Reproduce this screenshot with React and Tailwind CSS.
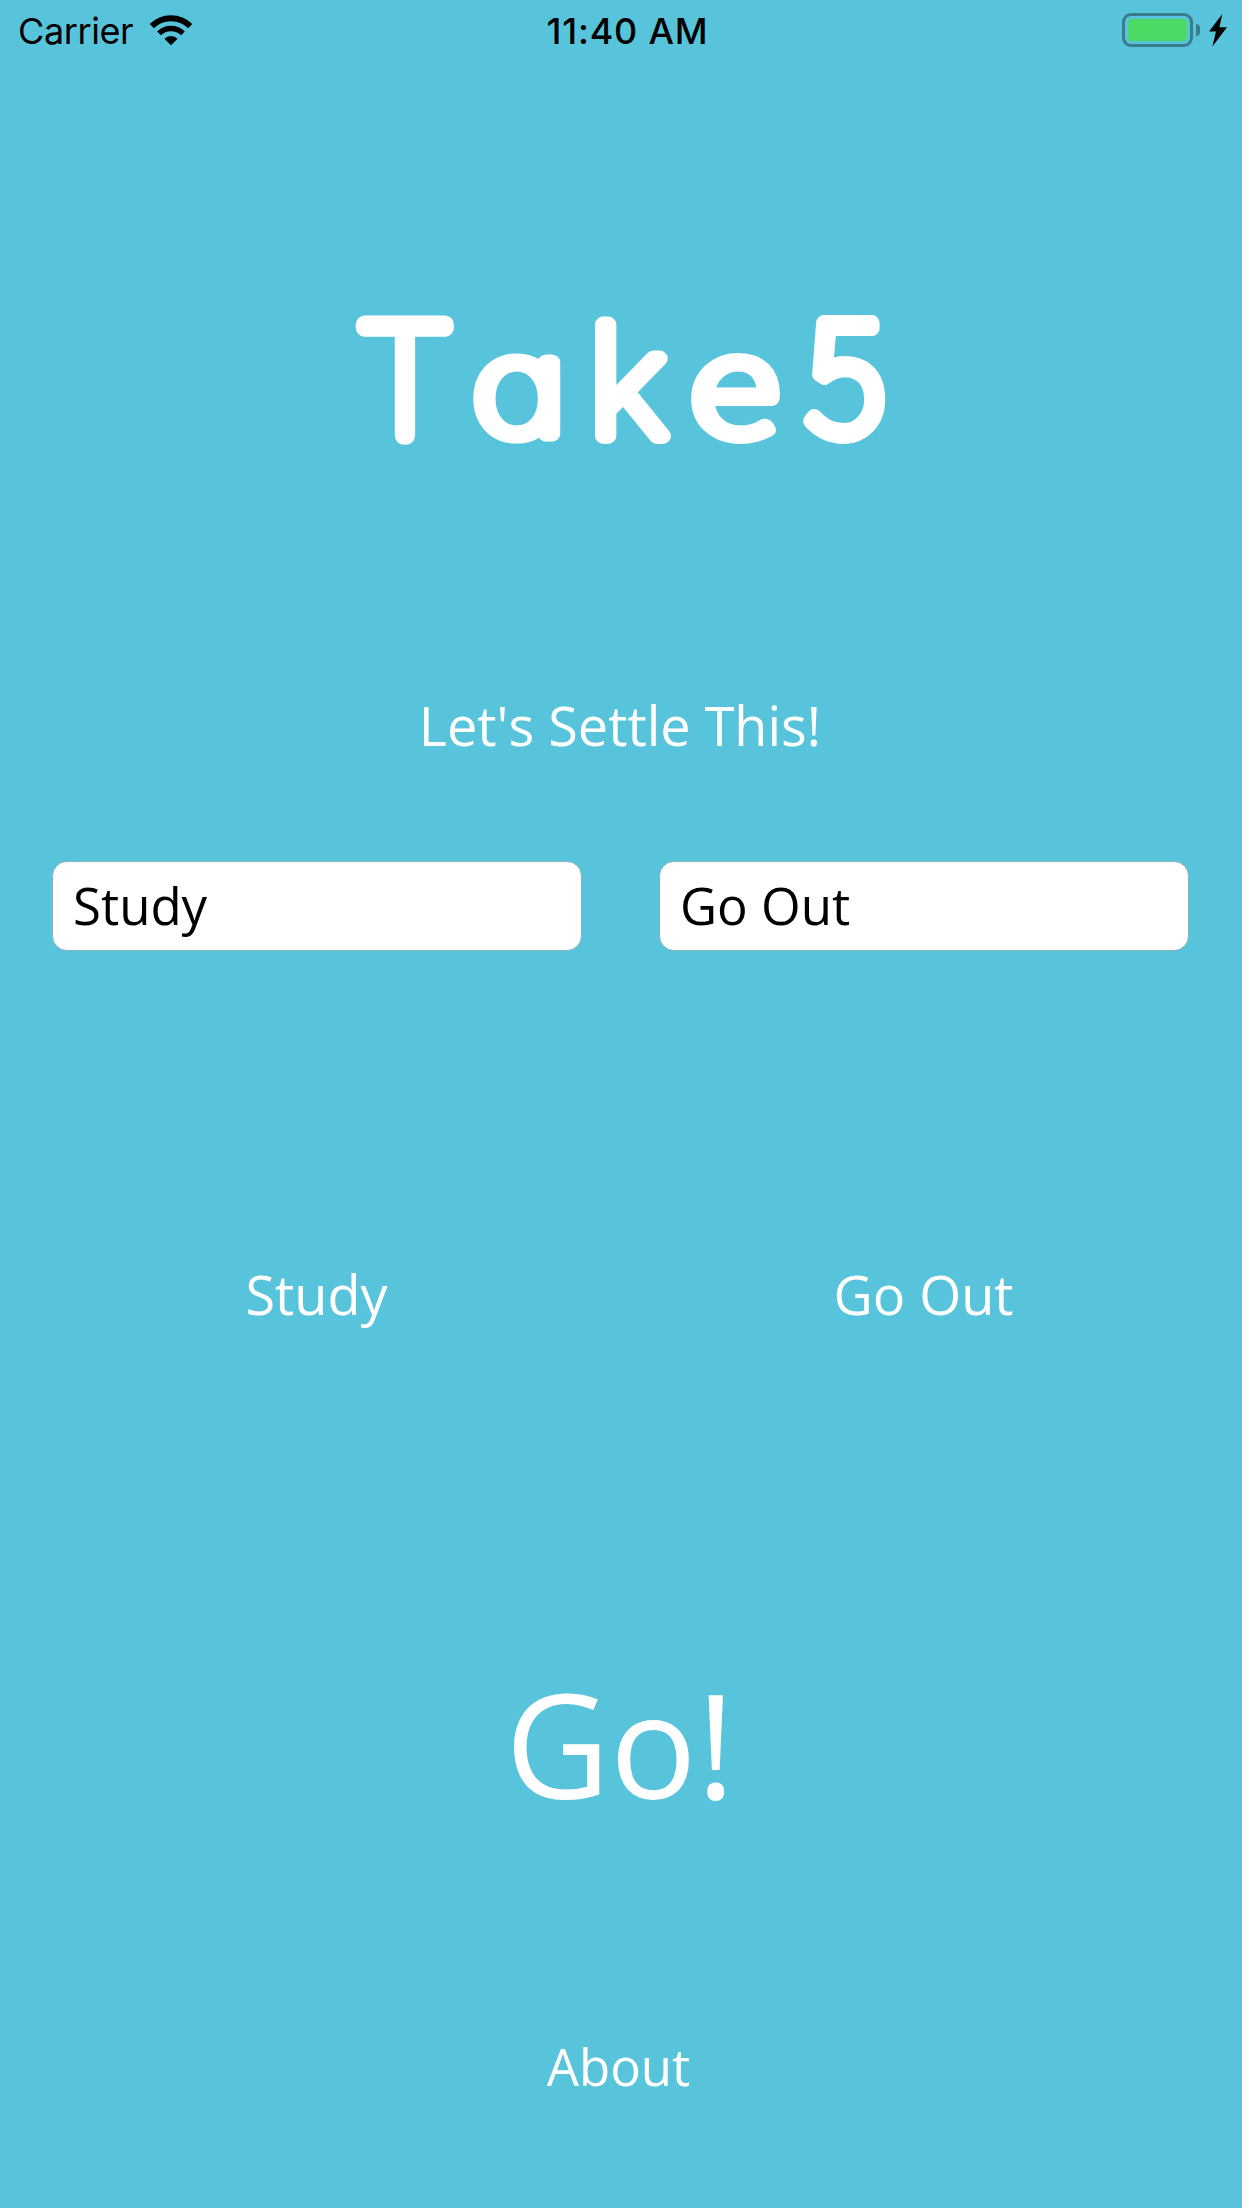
const logoGlyphs = [
  { ch: "T", x: 16.8, y: 199.6, sx: 0.942, font: "Lato", size: 157, stroke: 19 },
  { ch: "a", x: 126.2, y: 198.8, sx: 1.225, font: "Inter", size: 132.5, stroke: 17 },
  { ch: "k", x: 243.2, y: 200.8, sx: 1.08, font: "Noto Sans", size: 147.5, stroke: 16.5 },
  { ch: "e", x: 343.8, y: 199.7, sx: 1.215, font: "Noto Sans CJK SC", size: 138.5, stroke: 15.5 },
  { ch: "5", x: 460.4, y: 199.4, sx: 0.965, font: "Noto Sans CJK SC", size: 157.3, stroke: 15.5 },
];

function Logo() {
  return (
    <svg role="img" aria-label="Take5" width="550" height="290" viewBox="0 0 550 290" className="block">
      {logoGlyphs.map((g) => (
        <text
          key={g.ch}
          transform={`translate(${g.x} ${g.y}) scale(${g.sx} 1)`}
          fontFamily={`"${g.font}", sans-serif`}
          fontSize={g.size}
          className="fill-white stroke-white font-thin [font-feature-settings:'cv11'] [vector-effect:non-scaling-stroke]"
          strokeWidth={g.stroke}
          strokeLinejoin="round"
          strokeLinecap="round"
        >
          {g.ch}
        </text>
      ))}
    </svg>
  );
}

function WifiIcon() {
  return (
    <svg width="44" height="32" viewBox="0 0 44 32" className="block" fill="none" stroke="#000">
      <path d="M2.8 12.2A27.3 27.3 0 0 1 41.2 12.2" strokeWidth="6" />
      <path d="M10 19.4A17 17 0 0 1 34 19.4" strokeWidth="5.4" />
      <path d="M22 31.3 15.4 24.7A9.3 9.3 0 0 1 28.6 24.7Z" fill="#000" stroke="none" />
    </svg>
  );
}

function StatusBar() {
  return (
    <header className="grid h-[60px] grid-cols-[1fr_auto_1fr] items-start text-black font-['Inter',sans-serif]">
      <div className="flex items-start pl-[18px]">
        <span className="mt-[9px] text-[36px] leading-[44px] tracking-[-0.4px]">Carrier</span>
        <div className="ml-[16px] mt-[14px]">
          <WifiIcon />
        </div>
      </div>
      <span className="ml-[13px] mt-[9px] text-[36px] font-medium leading-[44px] tracking-[0.8px]">11:40 AM</span>
      <div className="flex items-start justify-end pr-[14px] pt-[13px]">
        <div className="h-[34px] w-[71px] rounded-[9px] border-[3px] border-[#3b7c8b] p-[3px]">
          <div className="h-full w-full rounded-[4px] bg-[#4cd964]" />
        </div>
        <div className="ml-[3px] mt-[11px] h-[12px] w-[4px] rounded-r-full bg-[#3b7c8b]" />
        <svg width="20" height="34" viewBox="0 0 20 34" className="ml-[8px] block">
          <path d="M14.3 1 1 18.6H8L4.4 33.5 19 14.3H11.4Z" fill="#000" />
        </svg>
      </div>
    </header>
  );
}

function ChoiceInput({ value }) {
  return (
    <div className="flex h-[90px] items-center rounded-[15px] border border-[#86b4be] bg-white pb-px pl-[20px] text-[51px] leading-none text-black">
      {value}
    </div>
  );
}

export default function App() {
  return (
    <div className="flex h-[2208px] w-[1242px] flex-col overflow-hidden bg-[#58c4dc] text-white font-['Open_Sans',sans-serif]">
      <StatusBar />
      <main className="flex flex-col items-center">
        <h1 className="mt-[175px] h-[290px]">
          <Logo />
        </h1>
        <p className="mt-[170px] pr-[2px] text-[54px] leading-[60px]">Let's Settle This!</p>
        <div className="mt-[106px] grid w-full grid-cols-2 gap-x-[77px] pl-[52px] pr-[53px]">
          <ChoiceInput value="Study" />
          <ChoiceInput value="Go Out" />
        </div>
        <div className="mt-[313px] grid w-full grid-cols-2 gap-x-[79px] pl-[52.5px] pr-[54.5px] text-center text-[54px] leading-[60px]">
          <span>Study</span>
          <span>Go Out</span>
        </div>
        <button className="mt-[339px] pr-[2px] text-[144px] leading-[160px]">Go!</button>
        <button className="mt-[213px] pr-[5px] text-[51px] leading-[60px]">About</button>
      </main>
    </div>
  );
}
